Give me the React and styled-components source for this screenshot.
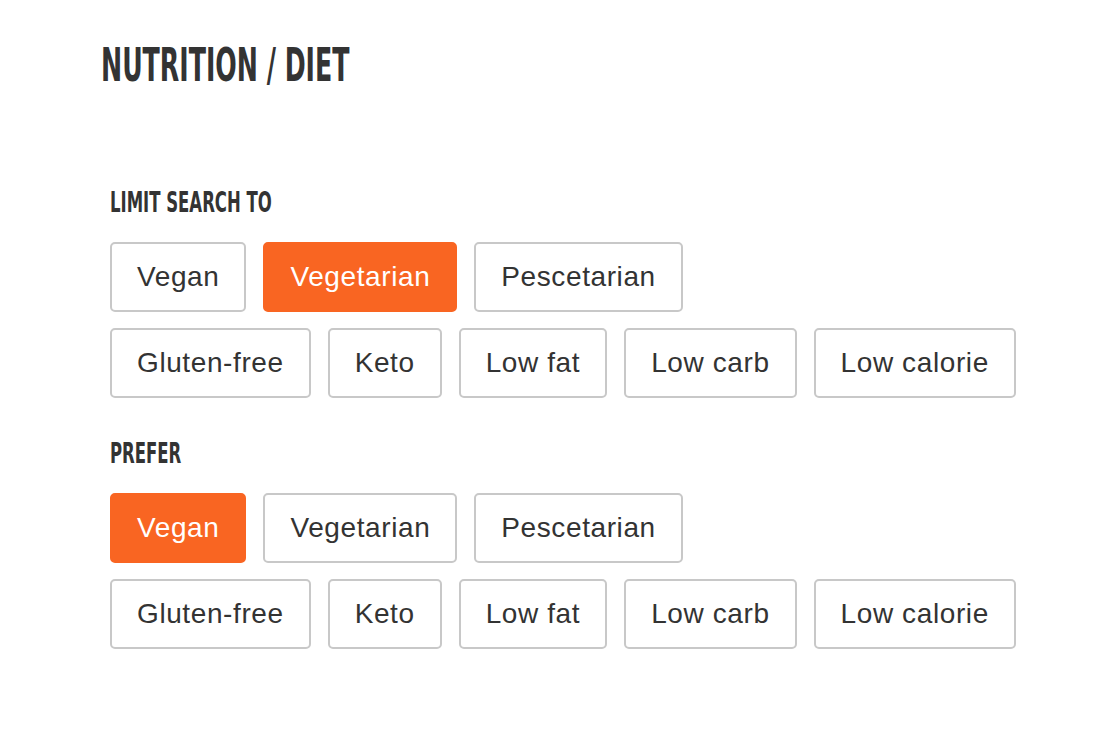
import React, { useState } from 'react';
import styled, { createGlobalStyle } from 'styled-components';

const GlobalStyle = createGlobalStyle`
    body {
        margin: 0;
        background: #fff;
        font-family: "Liberation Sans", Arial, sans-serif;
    }
`;

// diets are shown in two fixed rows
const ROWS = [
    ['Vegan', 'Vegetarian', 'Pescetarian'],
    ['Gluten-free', 'Keto', 'Low fat', 'Low carb', 'Low calorie'],
];

const Page = styled.div`
    padding: 40px 0 0 101px;
`;

const Title = styled.h1`
    margin: 0;
    font-family: "DejaVu Sans Condensed", "Liberation Sans", sans-serif;
    font-weight: 700;
    font-size: 46px;
    line-height: 50px;
    color: #333;
    display: inline-block;
    transform: scaleX(0.61);
    transform-origin: left;
    white-space: nowrap;
`;

const Section = styled.section`
    margin-left: 9px;
    padding-top: ${p => p.$top}px;
`;

const Label = styled.h2`
    margin: 0 0 25px;
    font-family: "DejaVu Sans Condensed", "Liberation Sans", sans-serif;
    font-weight: 700;
    font-size: 28px;
    line-height: 28px;
    color: #333;
    display: inline-block;
    transform: scaleX(0.655);
    transform-origin: left;
    white-space: nowrap;
`;

const Options = styled.div`
    display: flex;
    flex-direction: column;
    gap: 16px;
`;

const Row = styled.div`
    display: flex;
    gap: 17px;
`;

const Chip = styled.button`
    height: 70px;
    padding: 0 25px;
    border: 2px solid ${p => (p.$on ? '#f96522' : '#c8c8c8')};
    border-radius: 5px;
    background: ${p => (p.$on ? '#f96522' : '#fff')};
    color: ${p => (p.$on ? '#fff' : '#333')};
    font-family: "Liberation Sans", Arial, sans-serif;
    font-size: 28px;
    letter-spacing: 0.6px;
    cursor: pointer;
`;

const ChipGroup = ({ label, top, initial }) => {
    const [selected, setSelected] = useState(initial);
    return (
        <Section $top={top}>
            <Label>{label}</Label>
            <Options>
                {ROWS.map((row, i) => (
                    <Row key={i}>
                        {row.map(o => (
                            <Chip key={o} $on={o === selected} onClick={() => setSelected(o === selected ? null : o)}>
                                {o}
                            </Chip>
                        ))}
                    </Row>
                ))}
            </Options>
        </Section>
    );
};

export default function App() {
    return (
        <>
            <GlobalStyle />
            <Page>
                <Title>NUTRITION / DIET</Title>
                <ChipGroup label="LIMIT SEARCH TO" top={99} initial="Vegetarian" />
                <ChipGroup label="PREFER" top={42} initial="Vegan" />
            </Page>
        </>
    );
}
